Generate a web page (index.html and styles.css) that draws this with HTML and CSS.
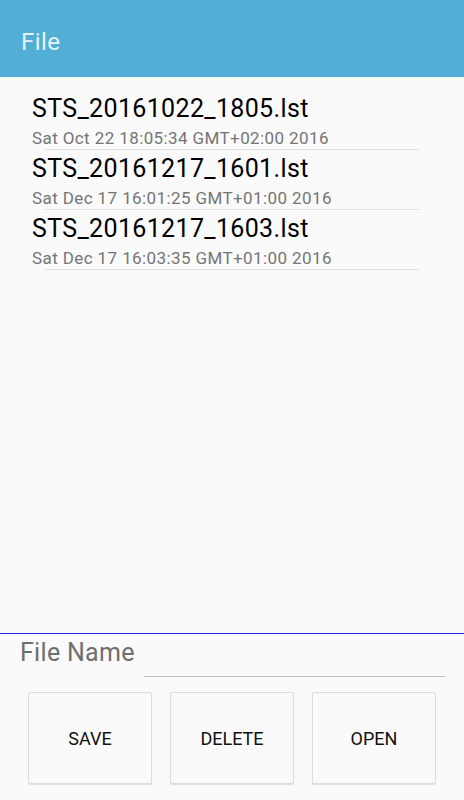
FILE: index.html
```html
<!DOCTYPE html>
<html lang="en">
<head>
    <meta charset="UTF-8">
    <meta name="viewport" content="width=device-width, initial-scale=1.0">
    <title>File</title>
    <link rel="stylesheet" href="styles.css">
</head>
<body>

    <div class="app">
        <div class="toolbar">
            <h1 class="toolbar-title">File</h1>
        </div>

        <ul class="file-list">
            <li class="file-item">
                <div class="file-name">STS_20161022_1805.lst</div>
                <div class="file-date">Sat Oct 22 18:05:34 GMT+02:00 2016</div>
                <div class="divider"></div>
            </li>
            <li class="file-item">
                <div class="file-name">STS_20161217_1601.lst</div>
                <div class="file-date">Sat Dec 17 16:01:25 GMT+01:00 2016</div>
                <div class="divider"></div>
            </li>
            <li class="file-item">
                <div class="file-name">STS_20161217_1603.lst</div>
                <div class="file-date">Sat Dec 17 16:03:35 GMT+01:00 2016</div>
                <div class="divider"></div>
            </li>
        </ul>

        <div class="footer">
            <div class="name-row">
                <label class="name-label" for="fileName">File Name</label>
                <input class="name-input" type="text" id="fileName">
            </div>
            <div class="actions">
                <button class="action">SAVE</button>
                <button class="action">DELETE</button>
                <button class="action">OPEN</button>
            </div>
        </div>
    </div>

</body>
</html>
```

FILE: styles.css
```css
body {
    margin: 0;
    font-family: Roboto, "Noto Sans", sans-serif;
    background-color: #fafafa;
}
.app {
    display: flex;
    flex-direction: column;
    height: 800px;
}
.toolbar {
    height: 77px;
    background: #52aed5;
    display: flex;
    align-items: center;
    padding: 7px 0 0 21px;
    box-sizing: border-box;
    flex-shrink: 0;
}
.toolbar-title {
    margin: 0;
    font-size: 24px;
    font-weight: normal;
    letter-spacing: 0.4px;
    color: #e6f3f9;
}
.file-list {
    list-style: none;
    margin: 0;
    padding: 13px 0 0;
    flex: 1;
}
.file-item {
    padding-top: 5px;
}
.file-name {
    padding-left: 32px;
    font-size: 25px;
    letter-spacing: 0.35px;
    line-height: 28px;
    color: #000;
}
.file-date {
    padding-left: 32px;
    margin-top: 5px;
    font-size: 17px;
    letter-spacing: 0.4px;
    line-height: 20px;
    color: #757575;
}
.divider {
    margin: 1px 0 0 45px;
    width: 374px;
    height: 1px;
    background: #e0e0e0;
}
.footer {
    border-top: 1px solid #1e1ee6;
    height: 166px;
    flex-shrink: 0;
}
.name-row {
    display: flex;
    align-items: flex-end;
    padding: 4px 19px 0 20px;
}
.name-label {
    flex-shrink: 0;
    white-space: nowrap;
    font-size: 25px;
    letter-spacing: 0.3px;
    line-height: 28px;
    color: #6e6e6e;
    padding-bottom: 10px;
}
.name-input {
    flex: 1;
    min-width: 0;
    margin-left: 9px;
    height: 38px;
    border: none;
    border-bottom: 1px solid #bdbdbd;
    background: transparent;
    outline: none;
    padding: 0;
    font-family: inherit;
    font-size: 24px;
}
.actions {
    display: grid;
    grid-template-columns: repeat(3, 124px);
    gap: 18px;
    padding: 15px 28px 0;
}
.action {
    height: 92px;
    background: #fafafa;
    border: 1px solid #dcdcdc;
    border-radius: 2px;
    box-shadow: 0 1px 1px rgba(0, 0, 0, 0.12);
    font-family: inherit;
    font-size: 18px;
    color: #111;
    padding: 0;
}
```
